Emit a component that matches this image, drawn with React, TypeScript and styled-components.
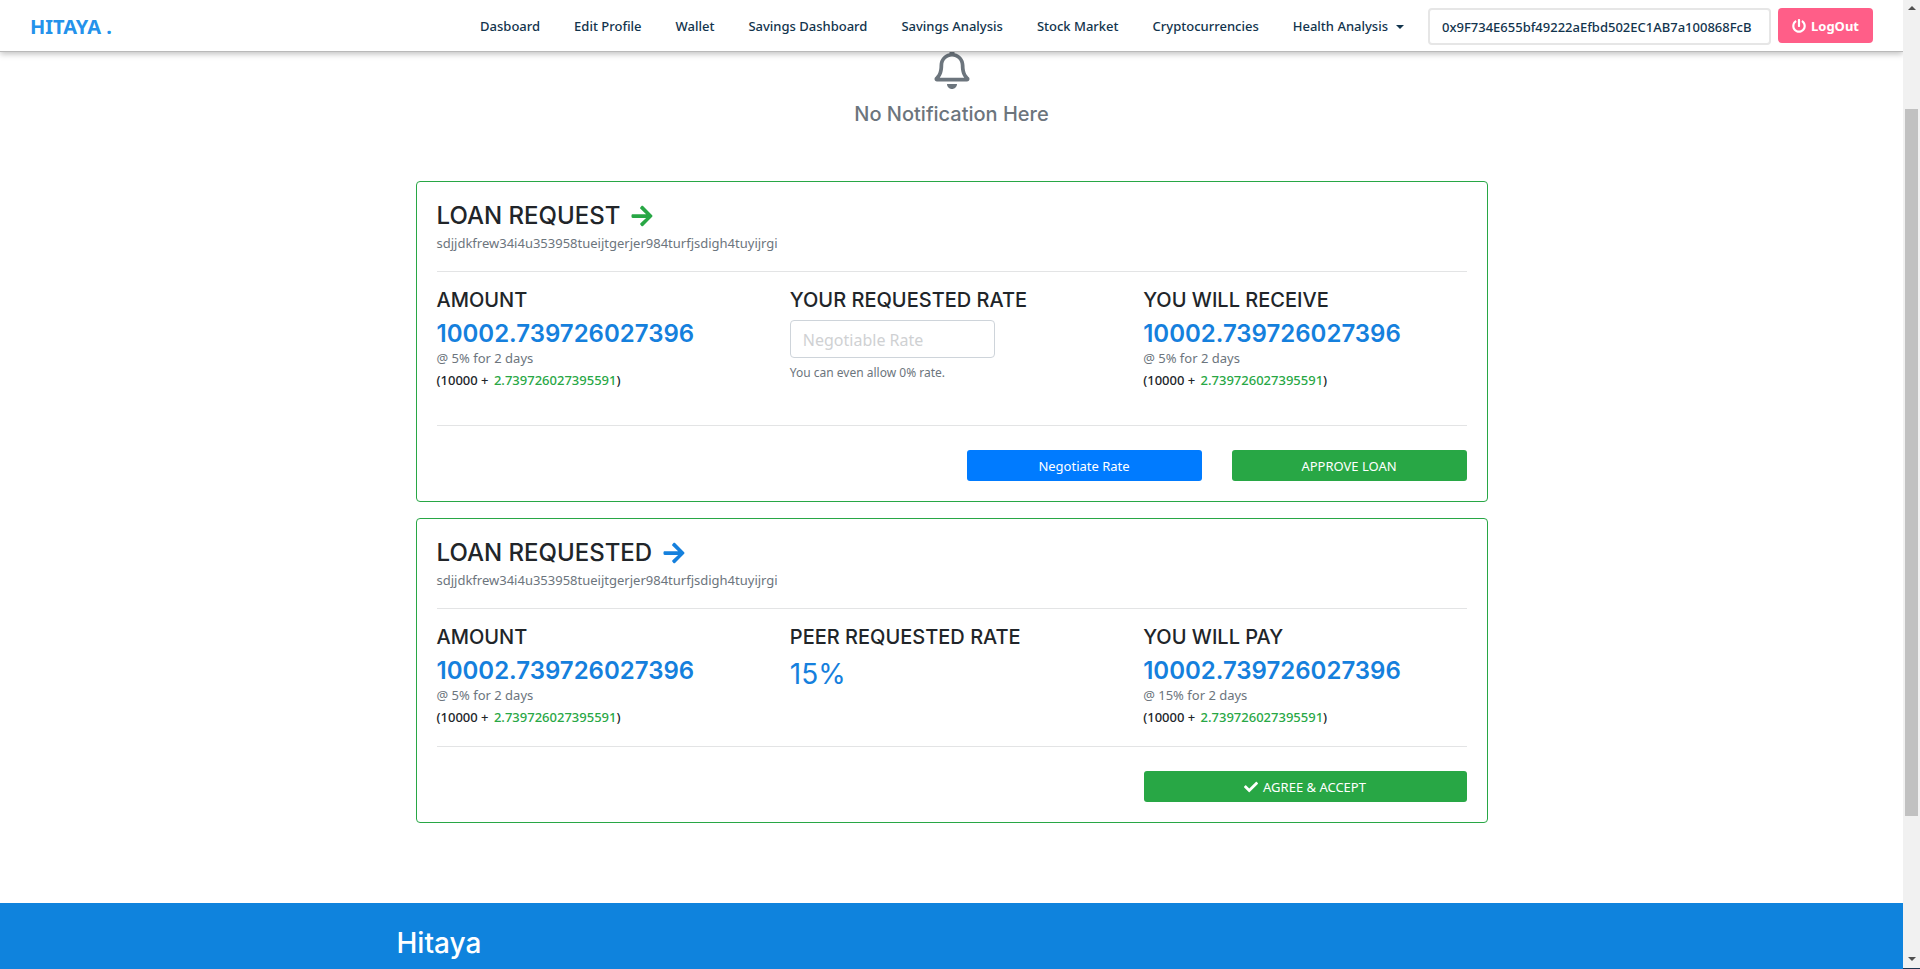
import React from "react";
import styled, { createGlobalStyle } from "styled-components";
import { FaArrowRight, FaCheck, FaPowerOff, FaRegBell } from "react-icons/fa";

const body = `"Segoe UI", "Noto Sans", "Open Sans", sans-serif`;
const heading = `Inter, "Liberation Sans", sans-serif`;

const GlobalStyle = createGlobalStyle`
  *, *::before, *::after { box-sizing: border-box; }
  body { margin: 0; background: #fff; color: #212529; font: 400 14px/21px ${body}; }
  h1, h2, h3, h4, p { margin: 0; }
  button, input { font-family: inherit; }
`;

const Window = styled.div`
  display: grid;
  grid-template-columns: minmax(0, 1fr) 17px;
  height: 100vh;
`;

const Page = styled.div`
  display: flex;
  flex-direction: column;
  min-width: 0;
  overflow: hidden;
`;

const Header = styled.header`
  position: relative;
  z-index: 1;
  flex: none;
  display: flex;
  align-items: center;
  justify-content: space-between;
  padding: 2px 30px 0;
  height: 52px;
  background: #fff;
  border-bottom: 1px solid #b9b9b9;
  box-shadow: 0 2px 6px rgba(0, 0, 0, 0.25);
`;

const Brand = styled.a`
  color: #2492eb;
  font: 700 20px/28px ${body};
  text-decoration: none;
`;

const Nav = styled.nav`
  display: flex;
  align-items: center;
  gap: 34px;
`;

const NavLink = styled.a`
  display: flex;
  align-items: center;
  gap: 8px;
  color: #12344d;
  font: 500 13px/21px ${body};
  text-decoration: none;
  white-space: nowrap;
`;

const Caret = styled.span`
  border: 4px solid transparent;
  border-top-color: currentColor;
  border-bottom: 0;
`;

const Account = styled.div`
  display: flex;
  align-items: flex-start;
  gap: 7px;
  margin-left: -10px;
`;

const Address = styled.input`
  width: 343px;
  height: 37px;
  padding: 0 12px;
  border: 2px solid #e6e6e6;
  border-radius: 4px;
  color: #12344d;
  font-size: 13px;
  font-weight: 500;
`;

const LogOut = styled.button`
  display: flex;
  align-items: center;
  justify-content: center;
  gap: 5px;
  width: 95px;
  height: 35px;
  border: 0;
  border-radius: 4px;
  background: #ff5e88;
  color: #fff;
  font-size: 13px;
  font-weight: 700;
`;

const Main = styled.main`
  flex: none;
  width: 100%;
  max-width: 1102px;
  margin: -3px auto 0;
  padding: 0 15px 80px;
`;

const Empty = styled.section`
  display: flex;
  flex-direction: column;
  align-items: center;
  gap: 13px;
  margin-bottom: 54px;
  color: #6c757d;
`;

const EmptyText = styled.h3`
  font: 500 20px/25px ${heading};
`;

const Card = styled.section`
  display: flex;
  flex-direction: column;
  padding: 19px 20px 20px;
  border: 1px solid #28a745;
  border-radius: 4px;

  & + & { margin-top: 16px; }
`;

const Title = styled.h2<{ $accent: string }>`
  display: flex;
  align-items: center;
  gap: 10px;
  margin-bottom: 3px;
  font: 500 24px/29px ${heading};

  svg { color: ${(p) => p.$accent}; }
`;

const Reference = styled.p`
  margin-bottom: 1px;
  color: #6c757d;
  font-size: 13px;
`;

const Rule = styled.hr`
  width: 100%;
  margin: 16px 0;
  border: 0;
  border-top: 1px solid #e3e4e5;
`;

const Columns = styled.div<{ $extra?: boolean }>`
  display: grid;
  grid-template-columns: repeat(3, minmax(0, 1fr));
  gap: 30px;
  padding-bottom: ${(p) => (p.$extra ? "18px" : "2px")};
`;

const Label = styled.h4`
  display: block;
  margin-bottom: 8px;
  font: 500 20px/24px ${heading};
`;

const Amount = styled.p`
  color: #1580dd;
  font: 600 24px/28px ${heading};
`;

const Rate = styled.p`
  color: #1580dd;
  font: 400 28px/34px ${heading};
`;

const Terms = styled.p`
  color: #6c757d;
  font: 400 13px/21px ${body};
`;

const Breakdown = styled.p`
  color: #212529;
  font: 500 13px/22px ${body};

  span { margin-left: 2px; color: #28a745; }
`;

const RateInput = styled.input`
  display: block;
  width: 205px;
  height: 38px;
  margin-bottom: 4px;
  padding: 2px 12px 0;
  border: 1px solid #ced4da;
  border-radius: 4px;
  font-size: 16px;

  &::placeholder { color: #cfd1d3; opacity: 1; }
`;

const Hint = styled.p`
  color: #6c757d;
  font-size: 12px;
  line-height: 21px;
`;

const Actions = styled.div`
  display: flex;
  justify-content: flex-end;
  gap: 30px;
  padding-top: 8px;
`;

const Button = styled.button<{ $tone: string; $width: number }>`
  display: flex;
  align-items: center;
  justify-content: center;
  gap: 5px;
  width: ${(p) => p.$width}px;
  height: 31px;
  border: 0;
  border-radius: 3px;
  background: ${(p) => p.$tone};
  color: #fff;
  font-size: 13px;
`;

const Footer = styled.footer`
  flex: 1;
  padding: 23px 0;
  background: #0f83dd;
  border-bottom: 1px solid #1c3550;
`;

const FooterInner = styled.div`
  max-width: 1110px;
  margin: 0 auto;
`;

const FooterTitle = styled.h2`
  color: #fff;
  font: 500 28px/34px ${heading};
`;

const ScrollTrack = styled.div`
  display: flex;
  flex-direction: column;
  align-items: center;
  padding: 6px 0 7px;
  background: #f1f1f1;
  border-bottom: 1px solid #1c3550;
`;

const ScrollArrow = styled.span<{ $down?: boolean }>`
  border: 4px solid transparent;
  border-${(p) => (p.$down ? "top" : "bottom")}-color: #505050;
  border-${(p) => (p.$down ? "bottom" : "top")}: 0;
`;

const ScrollThumb = styled.div`
  width: 13px;
  height: 74%;
  margin: 99px 0 auto;
  background: #c1c1c1;
`;

const links = [
  "Dasboard",
  "Edit Profile",
  "Wallet",
  "Savings Dashboard",
  "Savings Analysis",
  "Stock Market",
  "Cryptocurrencies",
];

const reference = "sdjjdkfrew34i4u353958tueijtgerjer984turfjsdigh4tuyijrgi";

function Sum({ label, rate }: { label: string; rate: string }) {
  return (
    <div>
      <Label>{label}</Label>
      <Amount>10002.739726027396</Amount>
      <Terms>@ {rate} for 2 days</Terms>
      <Breakdown>
        (10000 + <span>2.739726027395591</span>)
      </Breakdown>
    </div>
  );
}

export default function App() {
  return (
    <Window>
      <GlobalStyle />
      <Page>
        <Header>
          <Brand href="#">HITAYA .</Brand>
          <Nav>
            {links.map((link) => (
              <NavLink href="#" key={link}>{link}</NavLink>
            ))}
            <NavLink href="#">Health Analysis <Caret /></NavLink>
            <Account>
              <Address
                aria-label="Wallet address"
                readOnly
                value="0x9F734E655bf49222aEfbd502EC1AB7a100868FcB"
              />
              <LogOut type="button"><FaPowerOff size={14} /> LogOut</LogOut>
            </Account>
          </Nav>
        </Header>

        <Main>
          <Empty>
            <FaRegBell size={40} />
            <EmptyText>No Notification Here</EmptyText>
          </Empty>

          <Card>
            <Title $accent="#28a745">LOAN REQUEST <FaArrowRight size={24} /></Title>
            <Reference>{reference}</Reference>
            <Rule />
            <Columns $extra>
              <Sum label="AMOUNT" rate="5%" />
              <div>
                <Label as="label" htmlFor="rate">YOUR REQUESTED RATE</Label>
                <RateInput id="rate" placeholder="Negotiable Rate" />
                <Hint>You can even allow 0% rate.</Hint>
              </div>
              <Sum label="YOU WILL RECEIVE" rate="5%" />
            </Columns>
            <Rule />
            <Actions>
              <Button type="button" $tone="#007bff" $width={235}>Negotiate Rate</Button>
              <Button type="button" $tone="#28a745" $width={235}>APPROVE LOAN</Button>
            </Actions>
          </Card>

          <Card>
            <Title $accent="#1580dd">LOAN REQUESTED <FaArrowRight size={24} /></Title>
            <Reference>{reference}</Reference>
            <Rule />
            <Columns>
              <Sum label="AMOUNT" rate="5%" />
              <div>
                <Label>PEER REQUESTED RATE</Label>
                <Rate>15%</Rate>
              </div>
              <Sum label="YOU WILL PAY" rate="15%" />
            </Columns>
            <Rule />
            <Actions>
              <Button type="button" $tone="#28a745" $width={323}>
                <FaCheck size={14} /> AGREE &amp; ACCEPT
              </Button>
            </Actions>
          </Card>
        </Main>

        <Footer>
          <FooterInner>
            <FooterTitle>Hitaya</FooterTitle>
          </FooterInner>
        </Footer>
      </Page>
      <ScrollTrack aria-hidden="true">
        <ScrollArrow />
        <ScrollThumb />
        <ScrollArrow $down />
      </ScrollTrack>
    </Window>
  );
}
